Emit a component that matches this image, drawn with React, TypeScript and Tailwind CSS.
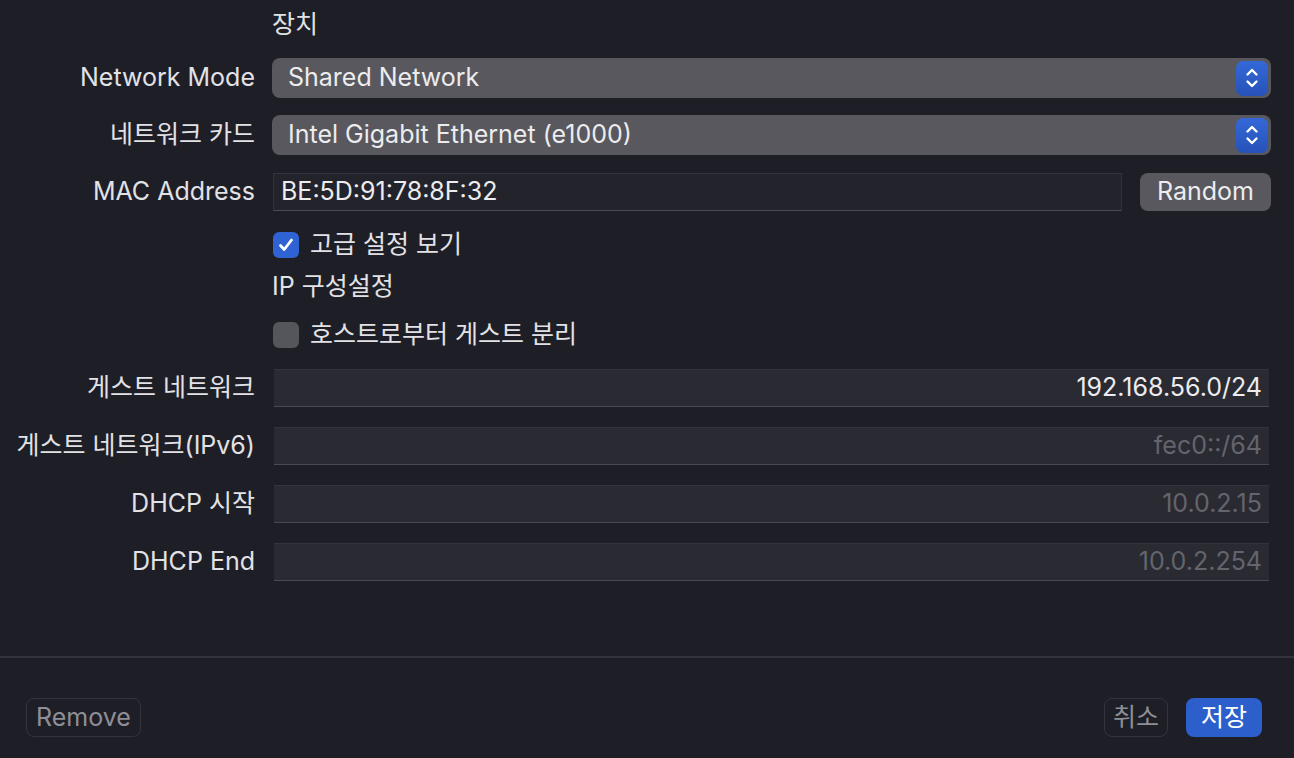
import React from "react";

const font = { fontFamily: '"Inter", "Noto Sans CJK KR", sans-serif' };

function Stepper() {
  return (
    <div className="flex h-[35px] w-[32px] items-center justify-center rounded-[7px] bg-gradient-to-b from-[#3468d8] to-[#2652b8]">
      <svg width="16" height="24" viewBox="0 0 16 24" fill="none" stroke="white" strokeWidth="2.4" strokeLinecap="round" strokeLinejoin="round">
        <path d="M3.5 8.5 L8 4 L12.5 8.5" />
        <path d="M3.5 15.5 L8 20 L12.5 15.5" />
      </svg>
    </div>
  );
}

function Label({ children }: { children: React.ReactNode }) {
  return <div className="w-[255px] shrink-0 whitespace-nowrap text-right text-[25px] text-[#e2e2e6]">{children}</div>;
}

function Select({ value }: { value: string }) {
  return (
    <div className="flex h-[40px] flex-1 items-center justify-between rounded-[8px] bg-[#58585e] pl-[16px] pr-[3px] text-[25px] text-[#ececee]">
      <span>{value}</span>
      <Stepper />
    </div>
  );
}

function Field({ value, dim }: { value: string; dim?: boolean }) {
  return (
    <div
      className={`flex h-[38px] flex-1 items-center justify-end border-b border-b-[#4a4a52] border-t border-t-[#33333b] bg-[#2a2a33] pr-[7px] text-[25px] ${
        dim ? "text-[#64646c]" : "text-[#ececee]"
      }`}
    >
      {value}
    </div>
  );
}

function Checkbox({ checked }: { checked?: boolean }) {
  return checked ? (
    <div className="flex h-[26px] w-[26px] items-center justify-center rounded-[6px] bg-[#2f62d2]">
      <svg width="18" height="18" viewBox="0 0 18 18" fill="none" stroke="white" strokeWidth="2.8" strokeLinecap="round" strokeLinejoin="round">
        <path d="M3.5 9.5 L7.2 13.5 L14.5 4" />
      </svg>
    </div>
  ) : (
    <div className="h-[26px] w-[26px] rounded-[6px] bg-[#55555c]" />
  );
}

export default function App() {
  return (
    <div style={font} className="flex h-[758px] w-[1294px] flex-col overflow-hidden bg-[#1e1e27] text-[#e2e2e6]">
      <div className="flex flex-col pr-[23px]">
        <div className="mt-[5px] flex h-[40px] items-center">
          <div className="w-[255px] shrink-0" />
          <div className="ml-[17px] text-[25px]">장치</div>
        </div>

        <div className="mt-[13px] flex items-center gap-[17px]">
          <Label>Network Mode</Label>
          <Select value="Shared Network" />
        </div>

        <div className="mt-[17px] flex items-center gap-[17px]">
          <Label>네트워크 카드</Label>
          <Select value="Intel Gigabit Ethernet (e1000)" />
        </div>

        <div className="mt-[18px] flex items-center gap-[17px]">
          <Label>MAC Address</Label>
          <div className="ml-[1px] flex flex-1 items-center gap-[18px]">
            <div className="flex h-[38px] flex-1 items-center border border-[#33333b] border-b-[#4a4a52] bg-[#23232c] pl-[7px] text-[25px] text-[#ececee]">
              BE:5D:91:78:8F:32
            </div>
            <div className="flex h-[38px] w-[131px] items-center justify-center rounded-[8px] bg-[#58585e] text-[25px] text-[#ececee]">
              Random
            </div>
          </div>
        </div>

        <div className="mt-[21px] flex h-[26px] items-center gap-[17px]">
          <div className="w-[255px] shrink-0" />
          <div className="ml-[1px] flex items-center gap-[11px]">
            <Checkbox checked />
            <span className="text-[25px]">고급 설정 보기</span>
          </div>
        </div>

        <div className="mt-[14px] flex h-[30px] items-center gap-[17px]">
          <div className="w-[255px] shrink-0" />
          <span className="text-[25px]">IP 구성설정</span>
        </div>

        <div className="mt-[20px] flex h-[26px] items-center gap-[17px]">
          <div className="w-[255px] shrink-0" />
          <div className="ml-[1px] flex items-center gap-[11px]">
            <Checkbox />
            <span className="text-[25px]">호스트로부터 게스트 분리</span>
          </div>
        </div>

        <div className="mt-[21px] flex items-center gap-[19px] pr-[2px]">
          <Label>게스트 네트워크</Label>
          <Field value="192.168.56.0/24" />
        </div>
        <div className="mt-[20px] flex items-center gap-[19px] pr-[2px]">
          <Label>게스트 네트워크(IPv6)</Label>
          <Field value="fec0::/64" dim />
        </div>
        <div className="mt-[20px] flex items-center gap-[19px] pr-[2px]">
          <Label>DHCP 시작</Label>
          <Field value="10.0.2.15" dim />
        </div>
        <div className="mt-[20px] flex items-center gap-[19px] pr-[2px]">
          <Label>DHCP End</Label>
          <Field value="10.0.2.254" dim />
        </div>
      </div>

      <div className="mt-[75px] h-[2px] w-full bg-[#33333c]" />

      <div className="mt-[40px] flex items-center justify-between pl-[26px] pr-[32px]">
        <div className="flex h-[39px] items-center rounded-[8px] border border-[#33333d] px-[9px] text-[25px] text-[#8e8e96]">
          Remove
        </div>
        <div className="flex items-center gap-[18px]">
          <div className="flex h-[39px] items-center rounded-[8px] border border-[#33333d] px-[8px] text-[25px] text-[#8e8e96]">
            취소
          </div>
          <div className="flex h-[39px] items-center rounded-[8px] bg-[#2c5fcb] px-[15px] text-[25px] text-white">
            저장
          </div>
        </div>
      </div>
    </div>
  );
}
